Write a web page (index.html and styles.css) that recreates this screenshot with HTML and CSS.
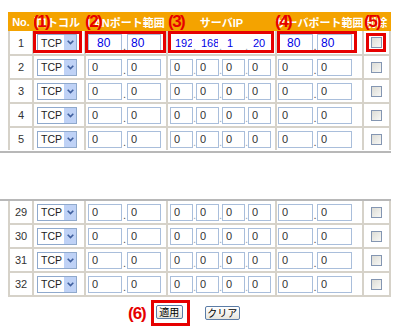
FILE: index.html
```html
<!DOCTYPE html>
<html lang="ja">
<head>
<meta charset="utf-8">
<title>ポート転送設定</title>
<link rel="stylesheet" href="styles.css">
</head>
<body>
<div class="page">
  <div class="hdr">
    <div class="h">No.</div>
    <div class="h clip left"><span class="ht ht1">プロトコル</span><b class="tag t1">(1)</b></div>
    <div class="h"><span class="ht">LANポート範囲</span><b class="tag t2">(2)</b></div>
    <div class="h"><span class="ht">サーバIP</span><b class="tag t3">(3)</b></div>
    <div class="h"><span class="ht">サーバポート範囲</span><b class="tag t4">(4)</b></div>
    <div class="h clip"><span class="ht">削除</span><b class="tag t5">(5)</b></div>
  </div>

  <div class="grid top">
    <div class="c no">1</div>
    <div class="c pr"><div class="sel"><span>TCP</span><i class="dd"><svg width="7" height="5" viewBox="0 0 7 5"><path d="M0.7 0.7 L3.5 3.6 L6.3 0.7" fill="none" stroke="#3f5f9e" stroke-width="1.6"/></svg></i></div><span class="mark m1"></span></div>
    <div class="c lan"><input class="in w34 v p" value="80"><span class="d">.</span><input class="in w34 v" value="80"><span class="mark m2"></span></div>
    <div class="c ip"><input class="in w23 v ipv" value="192"><span class="d s">.</span><input class="in w23 v ipv" value="168"><span class="d s">.</span><input class="in w23 v ipv" value="1"><span class="d s">.</span><input class="in w23 v ipv" value="20"><span class="mark m3"></span></div>
    <div class="c wan"><input class="in w35 v p" value="80"><span class="d w">.</span><input class="in w35 v" value="80"><span class="mark m4"></span></div>
    <div class="c chk"><span class="cb"></span><span class="mark m5"></span></div>

    <div class="c no">2</div>
    <div class="c pr"><div class="sel"><span>TCP</span><i class="dd"><svg width="7" height="5" viewBox="0 0 7 5"><path d="M0.7 0.7 L3.5 3.6 L6.3 0.7" fill="none" stroke="#3f5f9e" stroke-width="1.6"/></svg></i></div></div>
    <div class="c lan"><input class="in w34" value="0"><span class="d">.</span><input class="in w34" value="0"></div>
    <div class="c ip"><input class="in w23" value="0"><span class="d s">.</span><input class="in w23" value="0"><span class="d s">.</span><input class="in w23" value="0"><span class="d s">.</span><input class="in w23" value="0"></div>
    <div class="c wan"><input class="in w35" value="0"><span class="d w">.</span><input class="in w35" value="0"></div>
    <div class="c chk"><span class="cb"></span></div>

    <div class="c no">3</div>
    <div class="c pr"><div class="sel"><span>TCP</span><i class="dd"><svg width="7" height="5" viewBox="0 0 7 5"><path d="M0.7 0.7 L3.5 3.6 L6.3 0.7" fill="none" stroke="#3f5f9e" stroke-width="1.6"/></svg></i></div></div>
    <div class="c lan"><input class="in w34" value="0"><span class="d">.</span><input class="in w34" value="0"></div>
    <div class="c ip"><input class="in w23" value="0"><span class="d s">.</span><input class="in w23" value="0"><span class="d s">.</span><input class="in w23" value="0"><span class="d s">.</span><input class="in w23" value="0"></div>
    <div class="c wan"><input class="in w35" value="0"><span class="d w">.</span><input class="in w35" value="0"></div>
    <div class="c chk"><span class="cb"></span></div>

    <div class="c no">4</div>
    <div class="c pr"><div class="sel"><span>TCP</span><i class="dd"><svg width="7" height="5" viewBox="0 0 7 5"><path d="M0.7 0.7 L3.5 3.6 L6.3 0.7" fill="none" stroke="#3f5f9e" stroke-width="1.6"/></svg></i></div></div>
    <div class="c lan"><input class="in w34" value="0"><span class="d">.</span><input class="in w34" value="0"></div>
    <div class="c ip"><input class="in w23" value="0"><span class="d s">.</span><input class="in w23" value="0"><span class="d s">.</span><input class="in w23" value="0"><span class="d s">.</span><input class="in w23" value="0"></div>
    <div class="c wan"><input class="in w35" value="0"><span class="d w">.</span><input class="in w35" value="0"></div>
    <div class="c chk"><span class="cb"></span></div>

    <div class="c no">5</div>
    <div class="c pr"><div class="sel"><span>TCP</span><i class="dd"><svg width="7" height="5" viewBox="0 0 7 5"><path d="M0.7 0.7 L3.5 3.6 L6.3 0.7" fill="none" stroke="#3f5f9e" stroke-width="1.6"/></svg></i></div></div>
    <div class="c lan"><input class="in w34" value="0"><span class="d">.</span><input class="in w34" value="0"></div>
    <div class="c ip"><input class="in w23" value="0"><span class="d s">.</span><input class="in w23" value="0"><span class="d s">.</span><input class="in w23" value="0"><span class="d s">.</span><input class="in w23" value="0"></div>
    <div class="c wan"><input class="in w35" value="0"><span class="d w">.</span><input class="in w35" value="0"></div>
    <div class="c chk"><span class="cb"></span></div>
  </div>

  <div class="cut first"></div>
  <div class="cut second"></div>

  <div class="grid bottom">
    <div class="c no">29</div>
    <div class="c pr"><div class="sel"><span>TCP</span><i class="dd"><svg width="7" height="5" viewBox="0 0 7 5"><path d="M0.7 0.7 L3.5 3.6 L6.3 0.7" fill="none" stroke="#3f5f9e" stroke-width="1.6"/></svg></i></div></div>
    <div class="c lan"><input class="in w34" value="0"><span class="d">.</span><input class="in w34" value="0"></div>
    <div class="c ip"><input class="in w23" value="0"><span class="d s">.</span><input class="in w23" value="0"><span class="d s">.</span><input class="in w23" value="0"><span class="d s">.</span><input class="in w23" value="0"></div>
    <div class="c wan"><input class="in w35" value="0"><span class="d w">.</span><input class="in w35" value="0"></div>
    <div class="c chk"><span class="cb"></span></div>

    <div class="c no">30</div>
    <div class="c pr"><div class="sel"><span>TCP</span><i class="dd"><svg width="7" height="5" viewBox="0 0 7 5"><path d="M0.7 0.7 L3.5 3.6 L6.3 0.7" fill="none" stroke="#3f5f9e" stroke-width="1.6"/></svg></i></div></div>
    <div class="c lan"><input class="in w34" value="0"><span class="d">.</span><input class="in w34" value="0"></div>
    <div class="c ip"><input class="in w23" value="0"><span class="d s">.</span><input class="in w23" value="0"><span class="d s">.</span><input class="in w23" value="0"><span class="d s">.</span><input class="in w23" value="0"></div>
    <div class="c wan"><input class="in w35" value="0"><span class="d w">.</span><input class="in w35" value="0"></div>
    <div class="c chk"><span class="cb"></span></div>

    <div class="c no">31</div>
    <div class="c pr"><div class="sel"><span>TCP</span><i class="dd"><svg width="7" height="5" viewBox="0 0 7 5"><path d="M0.7 0.7 L3.5 3.6 L6.3 0.7" fill="none" stroke="#3f5f9e" stroke-width="1.6"/></svg></i></div></div>
    <div class="c lan"><input class="in w34" value="0"><span class="d">.</span><input class="in w34" value="0"></div>
    <div class="c ip"><input class="in w23" value="0"><span class="d s">.</span><input class="in w23" value="0"><span class="d s">.</span><input class="in w23" value="0"><span class="d s">.</span><input class="in w23" value="0"></div>
    <div class="c wan"><input class="in w35" value="0"><span class="d w">.</span><input class="in w35" value="0"></div>
    <div class="c chk"><span class="cb"></span></div>

    <div class="c no">32</div>
    <div class="c pr"><div class="sel"><span>TCP</span><i class="dd"><svg width="7" height="5" viewBox="0 0 7 5"><path d="M0.7 0.7 L3.5 3.6 L6.3 0.7" fill="none" stroke="#3f5f9e" stroke-width="1.6"/></svg></i></div></div>
    <div class="c lan"><input class="in w34" value="0"><span class="d">.</span><input class="in w34" value="0"></div>
    <div class="c ip"><input class="in w23" value="0"><span class="d s">.</span><input class="in w23" value="0"><span class="d s">.</span><input class="in w23" value="0"><span class="d s">.</span><input class="in w23" value="0"></div>
    <div class="c wan"><input class="in w35" value="0"><span class="d w">.</span><input class="in w35" value="0"></div>
    <div class="c chk"><span class="cb"></span></div>
  </div>

  <div class="actions">
    <b class="tag6">(6)</b>
    <span class="hl"><button class="btn apply">適用</button></span>
    <button class="btn clear">クリア</button>
  </div>
</div>
</body>
</html>
```

FILE: styles.css
```css
* {
  box-sizing: border-box;
  margin: 0;
  padding: 0;
}

html, body {
  background: #fff;
}

body {
  width: 400px;
  height: 327px;
  overflow: hidden;
  font-family: "Liberation Sans", "Noto Sans CJK JP", sans-serif;
  font-size: 11px;
  color: #333;
}

.page {
  padding-top: 12px;
}

/* header band */
.hdr {
  margin-left: 8px;
  width: 383px;
  height: 19px;
  background: #f4a300;
  display: grid;
  grid-template-columns: 22px 50px 80px 107px 85px 25px;
  column-gap: 2px;
  padding: 0 2px;
}

.h {
  position: relative;
  display: flex;
  align-items: center;
  justify-content: center;
  white-space: nowrap;
  color: #fff;
  font-family: "Liberation Sans", "Noto Sans CJK JP", sans-serif;
  font-weight: bold;
  font-size: 11px;
}

.h.clip {
  overflow: hidden;
}

.h.left {
  justify-content: flex-start;
}

.ht1 {
  margin-left: -9px;
}

.tag {
  position: absolute;
  top: 50%;
  transform: translateY(-52%);
  color: #e60000;
  font-family: "Liberation Sans", sans-serif;
  font-weight: bold;
  font-size: 17px;
  letter-spacing: -1.5px;
  line-height: 1;
  z-index: 2;
}

.t1 { left: -1px; }
.t2 { left: -1px; }
.t3 { left: 0; }
.t4 { left: -2px; }
.t5 { left: 0; }

/* table grids */
.grid {
  margin-left: 8px;
  width: 383px;
  background: #d6d2c9;
  display: grid;
  grid-template-columns: 22px 50px 80px 107px 85px 25px;
  gap: 2px;
  padding: 0 2px;
}

.grid.top {
  grid-template-rows: 23px repeat(4, 22px);
}

.grid.bottom {
  grid-template-rows: repeat(4, 22px);
  padding-bottom: 2px;
}

.c {
  position: relative;
  background: #fff;
  display: flex;
  align-items: center;
}

.no {
  justify-content: center;
  color: #333;
}

.pr { padding-left: 3px; }
.lan { padding-left: 2px; }
.ip { padding-left: 2px; }
.wan { padding-left: 1px; }
.chk { justify-content: center; }

/* select mock */
.sel {
  width: 40px;
  height: 17px;
  border: 1px solid #8fa9cc;
  background: #fff;
  display: flex;
  align-items: center;
  justify-content: space-between;
  padding-left: 3px;
  font-size: 10.5px;
  color: #222;
}

.dd {
  width: 12px;
  height: 15px;
  background: #bfd2f6;
  display: flex;
  align-items: center;
  justify-content: center;
}

/* inputs */
.in {
  height: 17px;
  border: 1px solid #a9bedb;
  background: #fff;
  padding: 0 0 0 3px;
  font-family: "Liberation Sans", sans-serif;
  font-size: 11px;
  color: #333;
  outline: none;
}

.in.v {
  color: #0000e6;
  font-size: 12px;
}

.in.p {
  padding-left: 8px;
}

.in.ipv {
  font-size: 11px;
  padding-left: 4px;
  border-color: #fff;
}

.w23 { width: 23px; }
.w34 { width: 34px; }
.w35 { width: 35px; }

.d {
  width: 5px;
  text-align: center;
  align-self: flex-end;
  padding-bottom: 2px;
  font-size: 11px;
  line-height: 11px;
  color: #555;
}

.d.s {
  width: 3px;
  color: #9aa8ba;
}

.d.w {
  width: 4px;
}

.cb {
  width: 11px;
  height: 11px;
  border: 1px solid #8496b2;
  background: linear-gradient(135deg, #dcdcd6, #f8f8f5);
}

/* red annotation boxes */
.mark {
  position: absolute;
  border: 3px solid #e60000;
  z-index: 2;
}

.m1 { left: -1px; width: 49px; top: 0; height: 22px; }
.m2 { left: -1px; right: 0; top: 0; height: 22px; }
.m3 { left: 0; right: 1px; top: 0; height: 22px; }
.m4 { left: 0; right: 5px; top: 0; height: 22px; }
.m5 { left: 2px; right: 3px; top: 2px; height: 19px; }

/* cut lines */
.cut {
  width: 391px;
  height: 2px;
  background: #b8b8b8;
}

.cut.first {
  margin-top: 1px;
}

.cut.second {
  margin-top: 46px;
}

/* actions */
.actions {
  margin-top: 3px;
  padding-left: 128px;
  display: flex;
  align-items: center;
}

.tag6 {
  color: #e60000;
  font-family: "Liberation Sans", sans-serif;
  font-weight: bold;
  font-size: 17px;
  letter-spacing: -1px;
  line-height: 1;
}

.hl {
  margin-left: 5px;
  border: 3px solid #e60000;
  padding: 2px 4px 4px 2px;
  display: flex;
}

.btn {
  height: 14px;
  border: 1px solid #5b7ca6;
  border-radius: 2px;
  background: linear-gradient(#ffffff, #e7e6de);
  font-family: "Noto Sans CJK JP", sans-serif;
  font-size: 10px;
  line-height: 12px;
  color: #000;
  display: flex;
  align-items: center;
  justify-content: center;
}

.apply { width: 27px; }

.clear {
  width: 35px;
  margin-left: 15px;
}
```
